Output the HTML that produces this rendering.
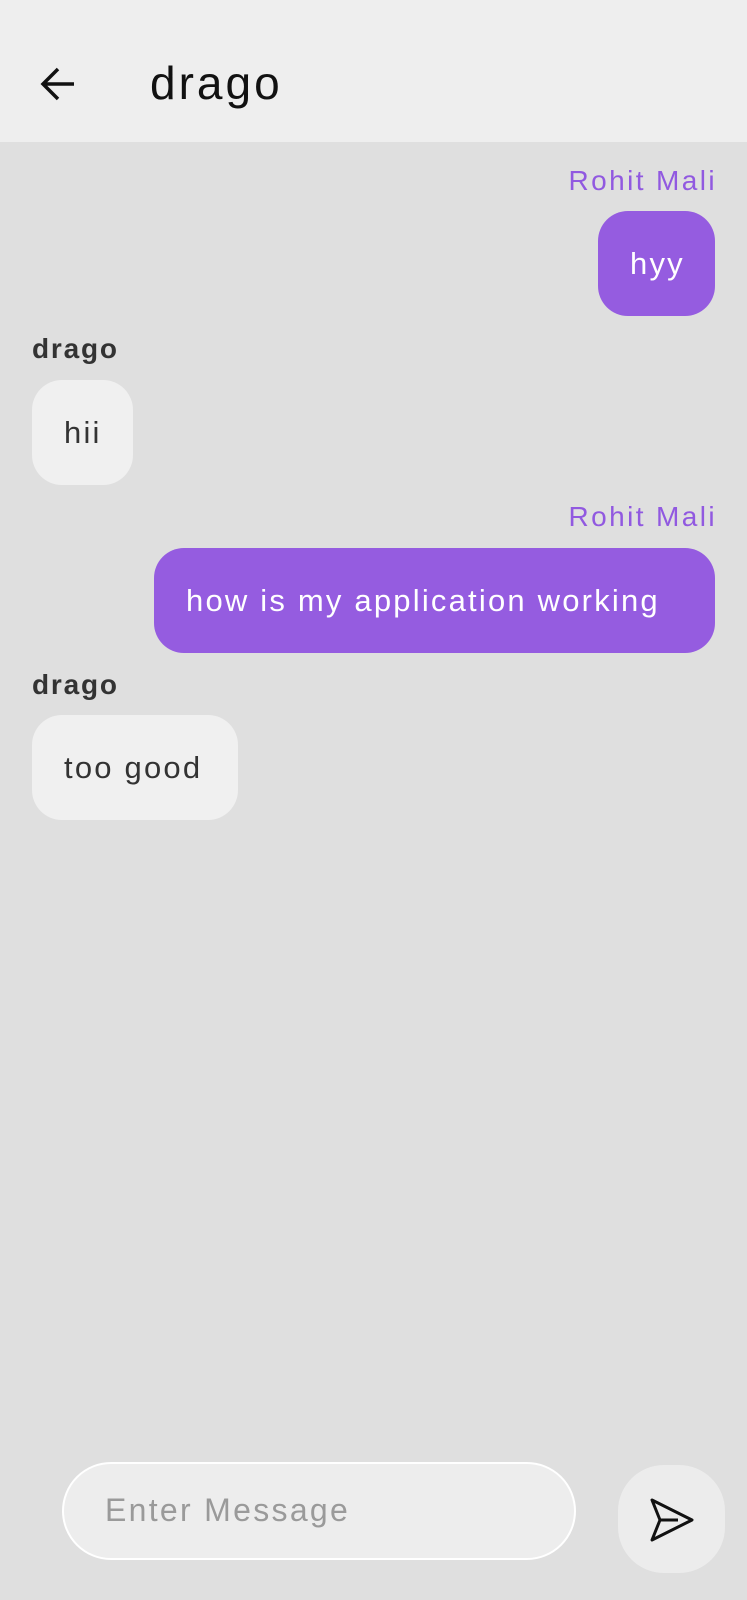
<!DOCTYPE html>
<html><head><meta charset="utf-8"><style>
*{margin:0;padding:0;box-sizing:border-box}
body{width:747px;height:1600px;background:#dfdfdf;font-family:"Liberation Sans",sans-serif;position:relative;overflow:hidden}
.hdr{position:absolute;left:0;top:0;width:747px;height:142px;background:#eeeeee}
.title{position:absolute;left:150px;top:56px;font-size:46px;color:#111;letter-spacing:3px}
.abs{position:absolute}
.name{position:absolute;font-size:28px;line-height:34px;letter-spacing:2.4px}
.me{color:#9159e0;right:30px;text-align:right}
.them{color:#333;left:32px;font-weight:bold;letter-spacing:1.8px}
.b{position:absolute;height:105px;border-radius:30px;font-size:31px;display:flex;align-items:center;padding-left:32px;letter-spacing:2.2px;white-space:nowrap}
.bm{background:#955ce0;color:#fff}
.bt{background:#f0f0f0;color:#333}
</style></head><body>
<div class="hdr">
<svg class="abs" style="left:40px;top:66px" width="36" height="36" viewBox="0 0 36 36"><path d="M34 18H4M18 3L3 18l15 15" fill="none" stroke="#111" stroke-width="3.5"/></svg>
<div class="title">drago</div>
</div>
<div class="name me" style="top:164px">Rohit Mali</div>
<div class="b bm" style="left:598px;width:117px;top:211px">hyy</div>
<div class="name them" style="top:332px">drago</div>
<div class="b bt" style="left:32px;width:101px;top:380px">hii</div>
<div class="name me" style="top:500px">Rohit Mali</div>
<div class="b bm" style="left:154px;width:561px;top:548px">how is my application working</div>
<div class="name them" style="top:668px">drago</div>
<div class="b bt" style="left:32px;width:206px;top:715px">too good</div>
<div class="abs" style="left:62px;top:1462px;width:514px;height:98px;border:2px solid #fff;border-radius:49px;background:#ededed"></div>
<div class="abs" style="left:105px;top:1492px;font-size:32px;color:#9a9a9a;letter-spacing:2.3px">Enter Message</div>
<div class="abs" style="left:618px;top:1465px;width:107px;height:108px;border-radius:46px;background:#ececec"></div>
<svg class="abs" style="left:648px;top:1496px" width="48" height="48" viewBox="0 0 48 48"><path d="M4 4L44 24 4 44 12 24Z M12 24H30" fill="none" stroke="#111" stroke-width="3" stroke-linejoin="round"/></svg>
</body></html>
